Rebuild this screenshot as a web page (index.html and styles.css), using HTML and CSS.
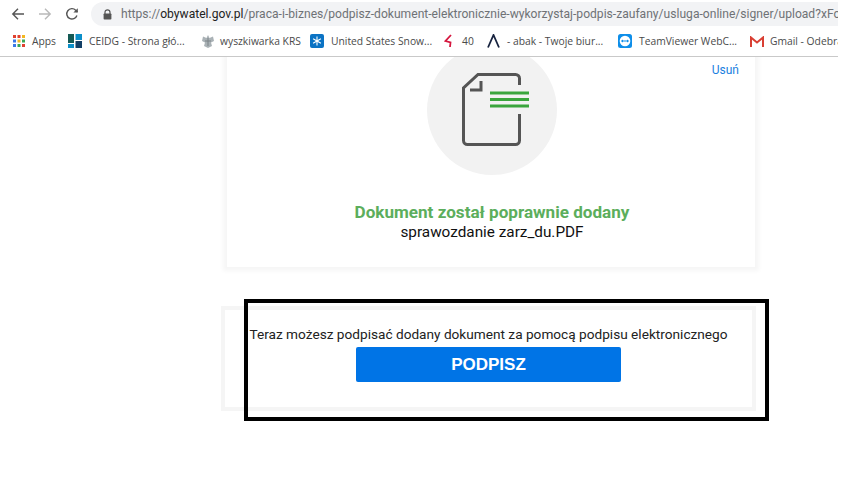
FILE: index.html
```html
<!DOCTYPE html>
<html lang="pl">
<head>
<meta charset="utf-8">
<title>Podpisz dokument</title>
<link rel="stylesheet" href="styles.css">
</head>
<body>
<header class="chrome">
  <div class="toolbar">
    <svg class="nav" width="16" height="16" viewBox="0 0 16 16"><path d="M14 8H3M8 2.800 2.800 8 8 13.200" fill="none" stroke="#555" stroke-width="1.400"/></svg>
    <svg class="nav" width="16" height="16" viewBox="0 0 16 16"><path d="M2 8h11M8 2.800 13.200 8 8 13.200" fill="none" stroke="#b9b9b9" stroke-width="1.400"/></svg>
    <svg class="nav" width="16" height="16" viewBox="0 0 16 16"><path d="M12.900 9.500A5.200 5.200 0 1 1 11.700 4.200L13.400 5.900" fill="none" stroke="#555" stroke-width="1.400"/><path d="M13.800 2.200V6.600H9.400Z" fill="#555"/></svg>
    <div class="omnibox">
      <svg class="lock" width="9" height="11" viewBox="0 0 9 11"><path d="M2 5V3.300a2.500 2.500 0 0 1 5 0V5" fill="none" stroke="#555" stroke-width="1.200"/><rect x="0.600" y="4.400" width="7.800" height="6.200" rx="0.800" fill="#555"/></svg>
      <span class="url"><span class="url-dim">https://</span>obywatel.gov.pl<span class="url-dim">/praca-i-biznes/podpisz-dokument-elektronicznie-wykorzystaj-podpis-zaufany/usluga-online/signer/upload?xFor</span></span>
    </div>
  </div>
  <nav class="bookmarks">
    <a class="bm bm-apps"><svg width="12" height="12" viewBox="0 0 12 12"><g><rect width="3" height="3" fill="#e0402f"/><rect x="4.500" width="3" height="3" fill="#e0402f"/><rect x="9" width="3" height="3" fill="#f3b61f"/><rect y="4.500" width="3" height="3" fill="#3b78e7"/><rect x="4.500" y="4.500" width="3" height="3" fill="#f3b61f"/><rect x="9" y="4.500" width="3" height="3" fill="#3aa757"/><rect y="9" width="3" height="3" fill="#3b78e7"/><rect x="4.500" y="9" width="3" height="3" fill="#3aa757"/><rect x="9" y="9" width="3" height="3" fill="#e0402f"/></g></svg><span>Apps</span></a>
    <a class="bm bm-ceidg"><svg width="14" height="14" viewBox="0 0 14 14"><rect width="14" height="14" fill="#fff"/><rect width="6" height="9" fill="#155a55"/><rect y="10" width="6" height="4" fill="#0b8fc9"/><rect x="7.500" width="6.500" height="6" fill="#0b8fc9"/><rect x="7.500" y="7" width="6.500" height="7" fill="#123f66"/></svg><span>CEIDG - Strona głó...</span></a>
    <a class="bm bm-krs"><svg width="14" height="15" viewBox="0 0 14 15"><path d="M7 1 8.500 4 12 2.500 13 7 10 8.500 11 12 7 14 3 12 4 8.500 1 7 2 2.500 5.500 4Z" fill="#aab2b6"/><path d="M7 4v8M4 7h6" stroke="#7d8488" stroke-width="1"/></svg><span>wyszkiwarka KRS</span></a>
    <a class="bm bm-usss"><svg width="14" height="14" viewBox="0 0 14 14"><rect width="14" height="14" rx="2" fill="#0b73c4"/><path d="M7 2.500v9M3.100 4.750l7.800 4.500M3.100 9.250l7.800-4.500" stroke="#fff" stroke-width="1.100"/></svg><span>United States Snow...</span></a>
    <a class="bm bm-40"><svg width="9" height="14" viewBox="0 0 9 14"><path d="M7 1 1.500 7 6.500 8.500 6 13" fill="none" stroke="#d5173f" stroke-width="1.800"/></svg><span>40</span></a>
    <a class="bm bm-abak"><svg width="13" height="14" viewBox="0 0 13 14"><path d="M1 13.500 6.500 1 12 13.500" fill="none" stroke="#17233f" stroke-width="1.800"/></svg><span>- abak - Twoje biur...</span></a>
    <a class="bm bm-tv"><svg width="14" height="14" viewBox="0 0 14 14"><rect width="14" height="14" rx="2.500" fill="#0e8ee9"/><circle cx="7" cy="7" r="5.300" fill="#fff"/><path d="M2.800 7 5 5.400V6.400H9V5.400L11.200 7 9 8.600V7.600H5V8.600Z" fill="#0e8ee9"/></svg><span>TeamViewer WebC...</span></a>
    <a class="bm bm-gmail"><svg width="14" height="11" viewBox="0 0 14 11"><path d="M1 11V1.500L7 6.500 13 1.500V11" fill="none" stroke="#d93f33" stroke-width="2"/></svg><span>Gmail - Odebra</span></a>
  </nav>
</header>
<main class="page">
  <section class="card-doc">
    <a class="remove">Usuń</a>
    <div class="doc-circle">
      <svg width="68" height="73" viewBox="0 0 68 73">
        <path d="M57.500 12V5.500a4 4 0 0 0-4-4H16L1.500 15V67.500a4 4 0 0 0 4 4H53.500a4 4 0 0 0 4-4V41" fill="none" stroke="#555" stroke-width="3"/>
        <path d="M19 8V17H8" fill="none" stroke="#555" stroke-width="3"/>
        <path d="M28 20H67M28 26.500H67M28 33H67" stroke="#3aa53d" stroke-width="3"/>
      </svg>
    </div>
    <h1 class="doc-title">Dokument został poprawnie dodany</h1>
    <p class="doc-name">sprawozdanie zarz_du.PDF</p>
  </section>
  <section class="card-sign">
    <p class="sign-text">Teraz możesz podpisać dodany dokument za pomocą podpisu elektronicznego</p>
    <button class="sign-btn">PODPISZ</button>
    <div class="highlight"></div>
  </section>
</main>
</body>
</html>
```

FILE: styles.css
```css
* { box-sizing: border-box; }
html, body { margin: 0; padding: 0; background: #fff; }
body { width: 841px; height: 497px; overflow: hidden; font-family: "Roboto", sans-serif; }

.chrome { position: relative; z-index: 1; width: 838px; height: 57px; border-bottom: 1px solid #c9c9c9; background: #fff; overflow: hidden; }
.toolbar { height: 27px; padding-top: 1px; display: flex; align-items: center; padding-left: 10px; }
.nav { flex: none; margin-right: 11px; }
.omnibox { flex: 1; min-width: 0; height: 24px; padding-left: 12px; display: flex; align-items: center; gap: 9px; background: #f2f3f5; border-radius: 12px 0 0 12px; overflow: hidden; }
.lock { flex: none; }
.url { font: 12.100px/24px "Roboto", sans-serif; color: #222; white-space: nowrap; }
.url-dim { color: #6f7276; }

.bookmarks { height: 28px; display: flex; align-items: center; padding-left: 13px; font: 10.300px/14px "Open Sans", sans-serif; color: #4a4a4a; white-space: nowrap; }
.bm { flex: none; display: flex; align-items: center; gap: 7px; }
.bm-apps { width: 55px; }
.bm-ceidg { width: 133px; }
.bm-krs { width: 109px; gap: 5px; }
.bm-usss { width: 134px; }
.bm-40 { width: 43px; gap: 9px; }
.bm-abak { width: 131px; }
.bm-tv { width: 132px; }
.bm-gmail { gap: 6px; }

.page { height: 440px; padding: 0 0 0 221px; overflow: hidden; position: relative; }

.card-doc { position: relative; width: 528px; height: 210px; margin-left: 6px; display: flex; flex-direction: column; align-items: center; background: #fff; box-shadow: 0 0 4px 4px #f6f6f6; }
.remove { position: absolute; top: 6px; right: 16px; font-size: 12px; line-height: 14px; color: #1a80e0; }
.doc-circle { flex: none; width: 130px; height: 130px; margin-top: -12px; margin-left: 2px; padding: 28px 0 0 35px; border-radius: 50%; background: #f2f2f2; }
.doc-circle svg { display: block; }
.doc-title { margin: 27px 0 0 2px; font-size: 17.100px; line-height: 20px; font-weight: 700; color: #5cae5c; }
.doc-name { margin: 0 0 0 2px; font-size: 15.300px; line-height: 20px; color: #111; }

.card-sign { position: relative; width: 535px; height: 105px; margin-top: 39px; display: flex; flex-direction: column; align-items: center; border: 4px solid #f5f5f5; background: #fff; }
.sign-text { margin: 15px 0 0; font-size: 13.650px; line-height: 18px; color: #222; white-space: nowrap; }
.sign-btn { width: 265px; height: 35px; margin: 4px 0 0; flex: none; border: 0; border-radius: 2px; background: #0074e6; color: #fff; font: 700 17px/35px "Liberation Sans", sans-serif; padding: 0; }
.highlight { position: absolute; left: 19px; top: -11px; width: 525px; height: 122px; border: 4px solid #000; }
```
